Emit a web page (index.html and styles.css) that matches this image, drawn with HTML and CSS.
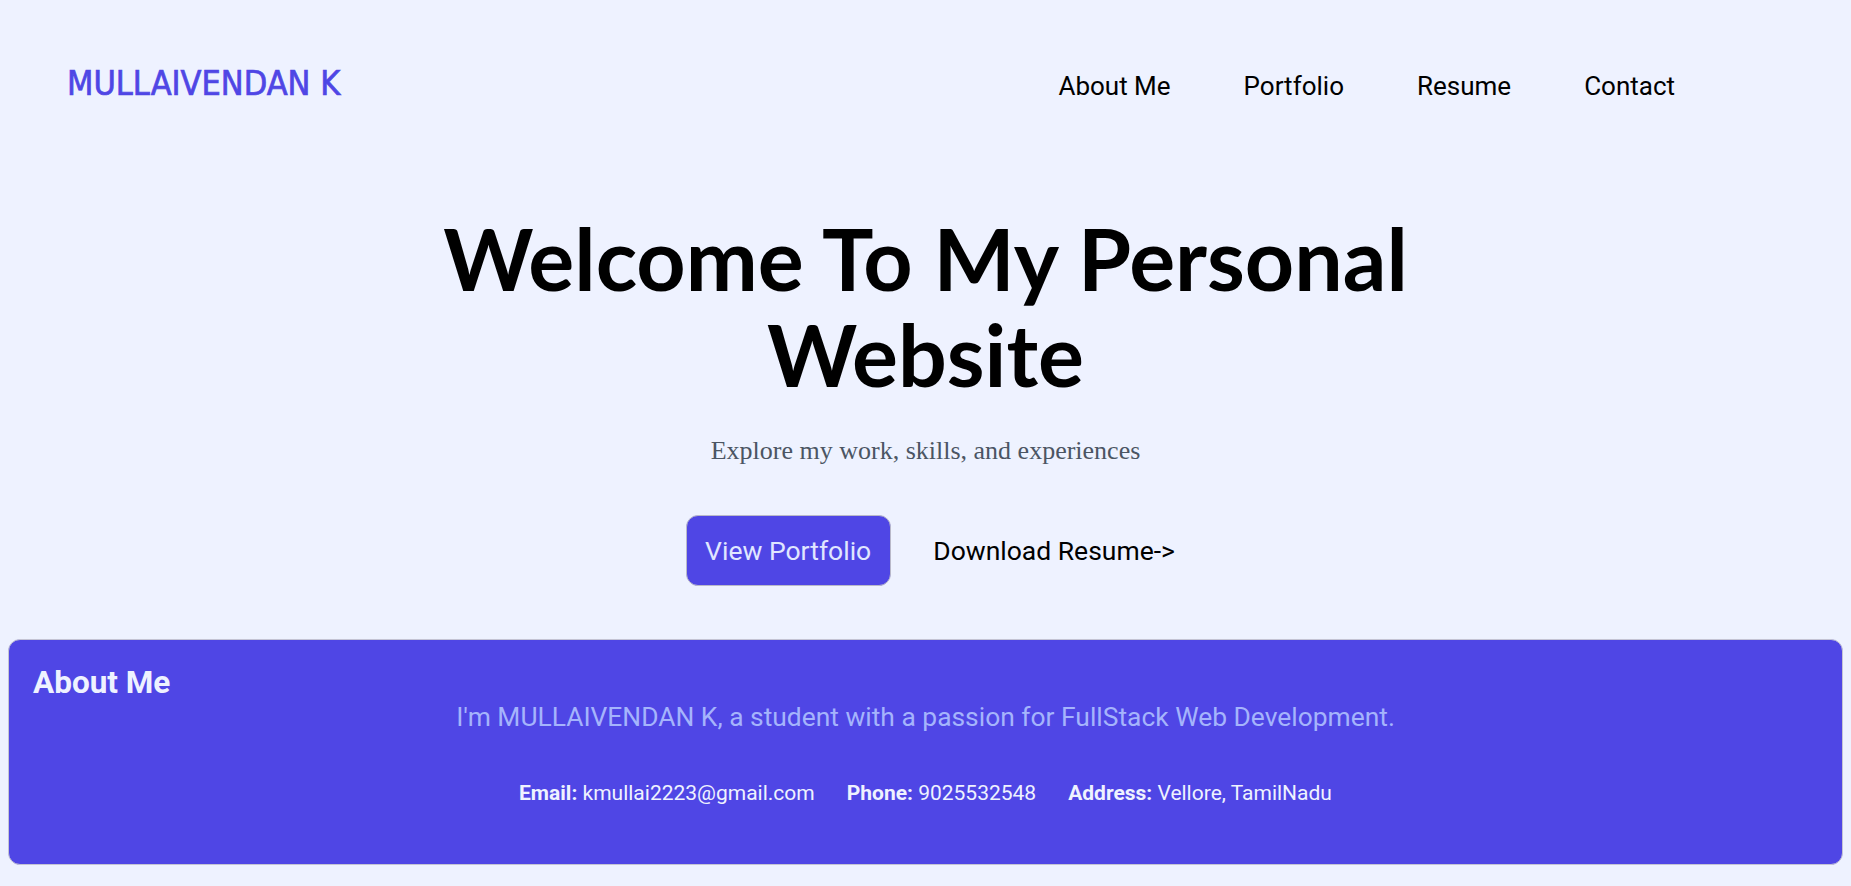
FILE: index.html
```html
<!DOCTYPE html>
<html lang="en">
<head>
<meta charset="utf-8">
<title>MULLAIVENDAN K</title>
<link rel="stylesheet" href="styles.css">
</head>
<body>
  <header class="site-header">
    <div class="logo">MULLAIVENDAN K</div>
    <nav class="nav">
      <a href="#about">About Me</a>
      <a href="#portfolio">Portfolio</a>
      <a href="#resume">Resume</a>
      <a href="#contact">Contact</a>
    </nav>
  </header>

  <section class="hero">
    <h1 class="hero-title">Welcome To My Personal<br>Website</h1>
    <p class="hero-sub">Explore my work, skills, and experiences</p>
    <div class="hero-actions">
      <a class="btn-primary" href="#portfolio">View Portfolio</a>
      <a class="btn-link" href="#resume">Download Resume-&gt;</a>
    </div>
  </section>

  <section class="about" id="about">
    <h2 class="about-title">About Me</h2>
    <p class="about-text">I'm MULLAIVENDAN K, a student with a passion for FullStack Web Development.</p>
    <div class="about-contact">
      <span><b>Email:</b> kmullai2223@gmail.com</span>
      <span><b>Phone:</b> 9025532548</span>
      <span><b>Address:</b> Vellore, TamilNadu</span>
    </div>
  </section>
</body>
</html>
```

FILE: styles.css
```css
html, body {
  background: #eef2ff;
}
body {
  margin: 8px;
  font-family: Roboto, "Liberation Sans", sans-serif;
  color: #000;
}
a {
  color: inherit;
  text-decoration: none;
}

.site-header {
  height: 154px;
  display: flex;
  align-items: center;
  justify-content: space-between;
  padding: 0 60px 0 59px;
}
.logo {
  font-family: "DejaVu Sans Condensed", "DejaVu Sans", sans-serif;
  font-stretch: condensed;
  font-size: 34px;
  color: #4f46e5;
  -webkit-text-stroke: 0.7px #4f46e5;
  margin-top: -4px;
}
.nav {
  display: flex;
  gap: 73px;
  padding-right: 108px;
  padding-top: 2px;
  font-size: 26px;
}

.hero {
  display: flex;
  flex-direction: column;
  align-items: center;
  text-align: center;
}
.hero-title {
  margin: 48px 0 0;
  font-family: Lato, "Noto Sans", sans-serif;
  font-weight: 700;
  font-size: 86px;
  line-height: 96px;
}
.hero-sub {
  margin: 34px 0 0;
  font-family: "Liberation Serif", serif;
  font-size: 26px;
  color: #4b5563;
}
.hero-actions {
  margin-top: 49px;
  display: flex;
  align-items: center;
  gap: 24px;
  padding-left: 28px;
}
.btn-primary,
.btn-link {
  font-size: 26.5px;
  line-height: 31px;
  padding: 19px 18.5px;
  border-radius: 12px;
}
.btn-primary {
  background: #4f46e5;
  color: #e0e7ff;
  border: 1px solid #b9b9c9;
}

.about {
  margin-top: 53px;
  background: #4f46e5;
  border: 1px solid #c4c4d4;
  border-radius: 12px;
  padding: 25px 24px 24px;
  box-sizing: border-box;
  height: 226px;
}
.about-title {
  margin: 0;
  font-size: 31.5px;
  font-weight: 700;
  line-height: 36px;
  color: #eef2ff;
}
.about-text {
  margin: 1px 0 0;
  text-align: center;
  font-size: 26.4px;
  line-height: 30px;
  color: #a5b4fc;
}
.about-contact {
  margin-top: 48px;
  display: flex;
  justify-content: center;
  gap: 32px;
  font-size: 21px;
  line-height: 26px;
  color: #eef2ff;
}
.about-contact b {
  font-weight: 700;
}
```
